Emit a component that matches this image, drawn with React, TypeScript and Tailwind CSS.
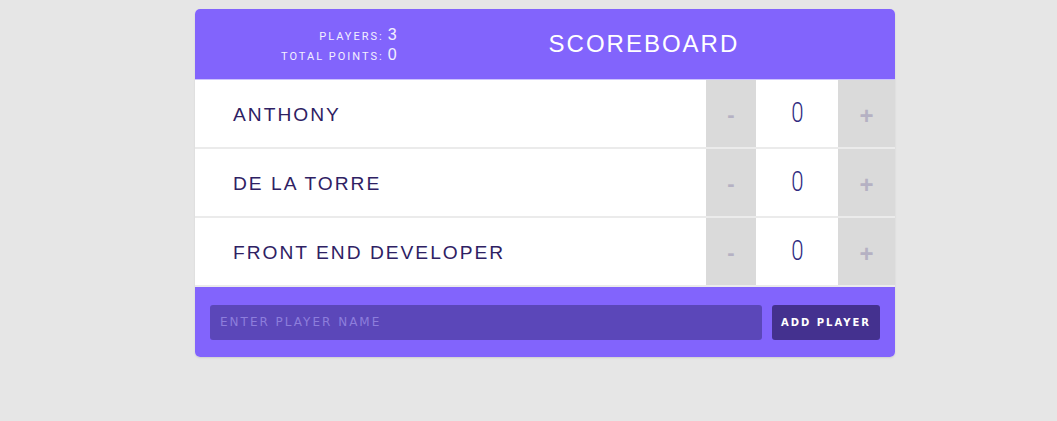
import { useState } from 'react';

type Player = { id: number; name: string; score: number };

const initialPlayers: Player[] = [
  { id: 1, name: 'Anthony', score: 0 },
  { id: 2, name: 'De La Torre', score: 0 },
  { id: 3, name: 'Front End Developer', score: 0 },
];

function Counter({ score, onChange }: { score: number; onChange: (d: number) => void }) {
  return (
    <div className="flex">
      <button
        onClick={() => onChange(-1)}
        className="w-[50px] bg-[#dadada] text-[#b5b1c3] text-[22px] font-bold pt-[2px]"
      >
        -
      </button>
      <div className="w-[82px] bg-white text-center text-[27px] font-light text-[#2f2a80] pt-[13px] font-['Roboto',sans-serif]">
        <span className="inline-block scale-x-[0.82]">{score}</span>
      </div>
      <button
        onClick={() => onChange(1)}
        className="w-[57px] bg-[#dadada] text-[#b5b1c3] text-[24px] font-bold pt-[5px]"
      >
        +
      </button>
    </div>
  );
}

export default function App() {
  const [players, setPlayers] = useState(initialPlayers);
  const [name, setName] = useState('');

  const total = players.reduce((sum, p) => sum + p.score, 0);

  const changeScore = (id: number, delta: number) => {
    setPlayers(players.map((p) => (p.id === id ? { ...p, score: p.score + delta } : p)));
  };

  const addPlayer = (e: React.FormEvent) => {
    e.preventDefault();
    if (!name.trim()) return;
    setPlayers([...players, { id: Date.now(), name, score: 0 }]);
    setName('');
  };

  return (
    <div className="min-h-screen bg-[#e6e6e6] pt-[9px] font-['Liberation_Sans',Arial,sans-serif]">
      <div className="w-[700px] ml-[195px] rounded-[5px] overflow-hidden bg-white shadow-[0_1px_2px_rgba(0,0,0,0.1)]">
        {/* Header */}
        <div className="h-[71px] bg-[#8264fc] flex items-center border-b border-[#cdc3fd]">
          <div className="ml-[86px] grid grid-cols-[auto_auto] gap-x-[4px] items-baseline text-[#f3f0ff] pt-[2px]">
            <span className="text-right text-[11px] tracking-[2px] font-['Roboto',sans-serif]">PLAYERS:</span>
            <span className="text-[16px] font-light leading-[20px]">{players.length}</span>
            <span className="text-right text-[11px] tracking-[2px] font-['Roboto',sans-serif]">TOTAL POINTS:</span>
            <span className="text-[16px] font-light leading-[20px]">{total}</span>
          </div>
          <h1 className="ml-[152px] text-[24px] tracking-[2px] text-white font-normal">SCOREBOARD</h1>
        </div>

        {/* Players */}
        {players.map((p) => (
          <div key={p.id} className="flex h-[69px] border-b-2 border-[#ebebeb] last:border-[#d0c8f5]">
            <div className="flex-1 flex items-center pl-[38px] pt-[3px] text-[19.2px] tracking-[2px] text-[#2e2163] uppercase">
              {p.name}
            </div>
            <Counter score={p.score} onChange={(d) => changeScore(p.id, d)} />
          </div>
        ))}

        {/* Add player form */}
        <form onSubmit={addPlayer} className="h-[70px] bg-[#8264fc] flex items-center gap-[10px] px-[15px]">
          <input
            value={name}
            onChange={(e) => setName(e.target.value)}
            placeholder="ENTER PLAYER NAME"
            className="flex-1 h-[35px] rounded-[3px] bg-[#5b47b9] px-[10px] text-[12px] tracking-[2px] text-white placeholder:text-[#8d7edc] outline-none font-['DejaVu_Sans',sans-serif]"
          />
          <button
            type="submit"
            className="w-[108px] h-[35px] rounded-[3px] bg-[#44318f] text-white text-[10px] font-bold tracking-[2px] font-['DejaVu_Sans',sans-serif]"
          >
            ADD PLAYER
          </button>
        </form>
      </div>
    </div>
  );
}
